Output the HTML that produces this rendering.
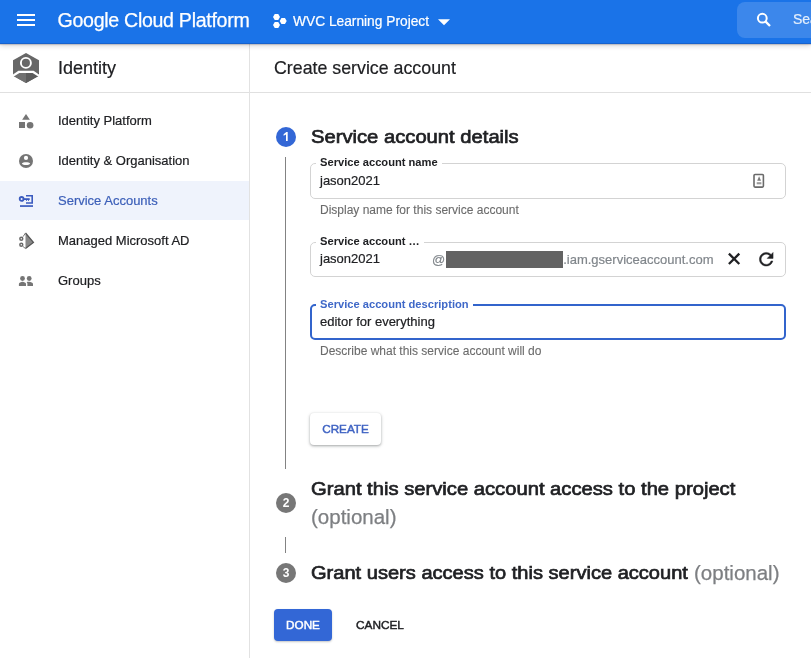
<!DOCTYPE html>
<html><head><meta charset="utf-8">
<style>
*{margin:0;padding:0;box-sizing:border-box}
html,body{width:811px;height:658px;overflow:hidden;background:#fff;font-family:"Liberation Sans",sans-serif;color:#202124}
.a{position:absolute;white-space:nowrap}
.sk{-webkit-text-stroke:0.2px currentColor}
.item .t,.val{-webkit-text-stroke:0.2px currentColor}
#wrap{position:absolute;left:0;top:0;width:811px;height:658px;will-change:transform}
#hdr{position:absolute;left:0;top:0;width:811px;height:44px;background:#1a73e8;box-shadow:inset 0 -1px 0 rgba(0,0,40,.14),0 1px 1px rgba(40,30,50,.18),0 2px 5px rgba(0,0,0,.16);z-index:5}
.hl{position:absolute;left:17px;width:18px;height:2px;background:#fff}
#search{position:absolute;left:737px;top:2px;width:120px;height:36px;border-radius:8px;background:rgba(255,255,255,.15)}
#side{position:absolute;left:0;top:44px;width:250px;height:614px;border-right:1px solid #e2e2e2}
#sidehdr{position:absolute;left:0;top:0;width:249px;height:49px;border-bottom:1px solid #e0e0e0}
.item{position:absolute;left:0;width:249px;height:40px}
.item .t{position:absolute;left:58px;top:1px;line-height:40px;font-size:13px;color:#202124}
.item svg{position:absolute;left:14px;top:8px}
#mainhdr{position:absolute;left:250px;top:44px;width:561px;height:49px;border-bottom:1px solid #e0e0e0}
.circ{position:absolute;width:20px;height:20px;border-radius:50%;color:#fff;font-size:12px;text-align:center;line-height:20px}
.vline{position:absolute;left:285px;width:1px;background:#838383}
.field{position:absolute;left:310px;width:476px;border:1px solid #d3d3d3;border-radius:5px}
.lbl{position:absolute;font-size:11.15px;font-weight:bold;background:#fff;padding:0 4px;line-height:13px}
.helper{position:absolute;left:320px;font-size:12px;color:#6b6b6b;line-height:14px;-webkit-text-stroke:0.1px #6b6b6b}
.val{position:absolute;left:320px;font-size:13px;color:#202124;line-height:16px}
.stephd{position:absolute;left:311px;font-size:19px;font-weight:normal;color:#202124;line-height:28px;-webkit-text-stroke:0.7px #202124;transform:scaleX(1.063);transform-origin:0 0}
.opt2{position:absolute;font-size:20.5px;color:#7d7f82;line-height:28px;-webkit-text-stroke:0.25px #7d7f82}
.opt{font-weight:normal;color:#80868b;font-size:20.5px;letter-spacing:0}
</style></head><body>
<div id="wrap">

<div id="hdr">
  <div class="hl" style="top:14px"></div>
  <div class="hl" style="top:19px"></div>
  <div class="hl" style="top:24px"></div>
  <div class="a" style="left:57.5px;top:8px;font-size:19.6px;line-height:24px;letter-spacing:-0.3px;color:#fff;-webkit-text-stroke:0.25px #fff">Google Cloud Platform</div>
  <svg class="a" style="left:268px;top:10px" width="24" height="22" viewBox="0 0 24 22"><path fill="#fff" d="M5.00 7.00 L6.75 3.90 L10.25 3.90 L12.00 7.00 L10.25 10.10 L6.75 10.10z M5.00 15.00 L6.75 11.90 L10.25 11.90 L12.00 15.00 L10.25 18.10 L6.75 18.10z M11.70 11.00 L13.45 7.90 L16.95 7.90 L18.70 11.00 L16.95 14.10 L13.45 14.10z"/></svg>
  <div class="a" style="left:293px;top:13px;font-size:13.75px;line-height:18px;color:#fff;-webkit-text-stroke:0.2px #fff">WVC Learning Project</div>
  <svg class="a" style="left:438px;top:19px" width="13" height="7" viewBox="0 0 13 7"><path d="M0 0.2h12L6 6.3z" fill="#fff"/></svg>
  <div id="search"></div>
  <svg class="a" style="left:750px;top:8px" width="26" height="24" viewBox="0 0 26 24"><circle cx="12.3" cy="10.2" r="4.4" fill="none" stroke="#fff" stroke-width="2"/><path d="M15.4 13.4L20 18" stroke="#fff" stroke-width="2.3" stroke-linecap="butt"/></svg>
  <div class="a" style="left:793px;top:10px;font-size:14px;line-height:18px;color:rgba(255,255,255,.85);-webkit-text-stroke:0.2px rgba(255,255,255,.85)">Search</div>
</div>

<div id="side">
  <div id="sidehdr">
    <svg class="a" style="left:13px;top:9px" width="26" height="30" viewBox="0 0 26 30">
      <path d="M13 0L26 7.2V22.8L13 30L0 22.8V7.2z" fill="#676767"/>
      <path d="M13 20V30L26 22.8V20z" fill="#5c5c5c"/>
      <path d="M13 20V30L0 22.8V20z" fill="#707070"/>
      <circle cx="12.9" cy="9.9" r="5" fill="none" stroke="#fff" stroke-width="1.9"/>
      <path d="M0 21.6L5.4 17.8H20.6L26 21.6V24L19.6 20H6.4L0 24z" fill="#fff"/>
    </svg>
    <div class="a" style="left:58px;top:12px;font-size:18px;line-height:24px;color:#202124;-webkit-text-stroke:0.2px #202124">Identity</div>
  </div>
  <div class="item" style="top:56px">
    <svg width="24" height="24" viewBox="0 0 24 24"><path d="M12 6L15.9 11.8H8.1z" fill="#757575"/><rect x="5" y="14" width="6" height="6" fill="#757575"/><circle cx="16.1" cy="17.2" r="3.3" fill="#757575"/></svg>
    <div class="t">Identity Platform</div>
  </div>
  <div class="item" style="top:96px">
    <svg width="24" height="24" viewBox="0 0 24 24"><circle cx="12" cy="13" r="7" fill="#757575"/><circle cx="12" cy="9.9" r="2.1" fill="#fff"/><path d="M7.8 15.4C9 13.7 15 13.7 16.2 15.4C15 17.5 9 17.5 7.8 15.4z" fill="#fff"/></svg>
    <div class="t">Identity &amp; Organisation</div>
  </div>
  <div class="item" style="top:136px;background:linear-gradient(#fff 0,#fff 1px,#eff3fc 1px)">
    <svg width="24" height="24" viewBox="0 0 24 24">
      <circle cx="7.6" cy="10.9" r="1.9" fill="none" stroke="#3b5bbf" stroke-width="1.8"/>
      <rect x="10" y="10.2" width="5.7" height="1.8" fill="#3b5bbf"/>
      <rect x="12" y="11.9" width="1" height="0.9" fill="#3b5bbf"/><rect x="14" y="11.9" width="1" height="0.9" fill="#3b5bbf"/>
      <path d="M12 7.75H18.2V14.95H12" fill="none" stroke="#3b5bbf" stroke-width="1.6"/>
      <rect x="6" y="17.2" width="13" height="1.7" fill="#3b5bbf"/>
    </svg>
    <div class="t" style="color:#3d60b9">Service Accounts</div>
  </div>
  <div class="item" style="top:176px">
    <svg width="24" height="24" viewBox="0 0 24 24">
      <path d="M11.5 5L19.4 14.4L11.5 20.6z" fill="#888"/>
      <path d="M11.5 5L19.4 14.4L11.5 20.6" fill="none" stroke="#555" stroke-width="1.3"/>
      <path d="M11.5 5L9 8.7M11.5 20.6L9 18.5" stroke="#777" stroke-width="1"/>
      <circle cx="7.3" cy="10.7" r="1.45" fill="none" stroke="#6a6a6a" stroke-width="1.5"/>
      <circle cx="7.3" cy="16.8" r="1.45" fill="none" stroke="#6a6a6a" stroke-width="1.5"/>
    </svg>
    <div class="t">Managed Microsoft AD</div>
  </div>
  <div class="item" style="top:216px">
    <svg width="24" height="24" viewBox="0 0 24 24">
      <circle cx="8.5" cy="10.5" r="2.4" fill="#757575"/><circle cx="15.2" cy="10.5" r="2.4" fill="#757575"/>
      <path d="M4.9 18V16c0-1.200 2.100-2.200 3.600-2.200s3.500 1 3.500 2.200V18z" fill="#757575"/>
      <path d="M13.4 18V15.6c0-.8-.5-1.400-.8-1.700.7-.1 1.500-.1 2.600-.1 1.500 0 3.800.9 3.800 2.300V18z" fill="#757575"/>
    </svg>
    <div class="t">Groups</div>
  </div>
</div>

<div id="mainhdr">
  <div class="a" style="left:24px;top:12px;font-size:17.8px;line-height:24px;color:#202124;-webkit-text-stroke:0.2px #202124">Create service account</div>
</div>

<!-- step 1 -->
<div class="circ" style="left:276px;top:127px;background:#3367d6"><svg style="position:absolute;left:0;top:0" width="20" height="20" viewBox="0 0 20 20"><path d="M7.6 7.3L10.3 5H11.7V14H10V7.4L7.6 8.7z" fill="#fff"/></svg></div>
<div class="stephd" style="top:123px">Service account details</div>
<div class="vline" style="top:157px;height:312px"></div>

<div class="field" style="top:163px;height:36px"></div>
<div class="lbl" style="left:316px;top:156px">Service account name</div>
<div class="val" style="top:173px">jason2021</div>
<svg class="a" style="left:752px;top:173px" width="14" height="17" viewBox="0 0 14 17">
  <rect x="2" y="1.5" width="9.4" height="12.6" rx="1" fill="none" stroke="#6a6a6a" stroke-width="1.6"/>
  <path d="M7.1 3.2L9 7.8H5.2z" fill="#7a7a7a"/><rect x="4.7" y="9.2" width="4.7" height="2.1" fill="#9a9a9a"/>
</svg>
<div class="helper" style="top:203px">Display name for this service account</div>

<div class="field" style="top:242px;height:35px"></div>
<div class="lbl" style="left:316px;top:235px">Service account …</div>
<div class="val" style="top:251px">jason2021</div>
<div class="a" style="left:432px;top:251px;font-size:13px;line-height:16px;color:#80868b;-webkit-text-stroke:0.2px #80868b">@<span style="display:inline-block;width:117px;height:17px;vertical-align:-4px;background:#636363;margin-left:1px"></span>.iam.gserviceaccount.com</div>
<svg class="a" style="left:724px;top:249px" width="20" height="20" viewBox="0 0 20 20"><path d="M4.9 4.6L15.3 15M15.3 4.6L4.9 15" stroke="#202124" stroke-width="2.3"/></svg>
<svg class="a" style="left:755.5px;top:249px" width="20.5" height="20.5" viewBox="0 0 24 24"><path fill="#202124" stroke="#202124" stroke-width=".5" d="M17.65 6.35C16.2 4.9 14.21 4 12 4c-4.42 0-7.99 3.58-7.99 8s3.57 8 7.99 8c3.73 0 6.84-2.55 7.73-6h-2.08c-.82 2.33-3.04 4-5.65 4-3.31 0-6-2.69-6-6s2.69-6 6-6c1.66 0 3.14.69 4.22 1.78L13 11h7V4l-2.35 2.35z"/></svg>

<div class="field" style="top:304px;height:36px;border:2px solid #3264cc;border-radius:5px"></div>
<div class="lbl" style="left:316px;top:298px;color:#3f68c8">Service account description</div>
<div class="val" style="top:314px">editor for everything</div>
<div class="helper" style="top:344px">Describe what this service account will do</div>

<div class="a" style="left:310px;top:413px;width:71px;height:32px;border-radius:4px;background:#fff;box-shadow:0 1px 2px rgba(60,64,67,.3),0 1px 3px 1px rgba(60,64,67,.15);color:#3f63c3;font-size:11.7px;font-weight:normal;-webkit-text-stroke:0.45px #3f63c3;text-align:center;line-height:31px;letter-spacing:0">CREATE</div>

<!-- step 2 -->
<div class="circ" style="left:276px;top:493px;background:#777;font-weight:bold">2</div>
<div class="stephd" style="top:475px">Grant this service account access to the project</div>
<div class="opt2" style="left:311px;top:503px">(optional)</div>
<div class="vline" style="top:537px;height:16px"></div>

<!-- step 3 -->
<div class="circ" style="left:276px;top:563px;background:#777;font-weight:bold">3</div>
<div class="stephd" style="top:559px;transform:scaleX(1.056)">Grant users access to this service account</div>
<div class="opt2" style="left:694px;top:559px">(optional)</div>

<div class="a" style="left:274px;top:609px;width:58px;height:32px;border-radius:4px;background:#3367d6;box-shadow:0 1px 2px rgba(60,64,67,.3);color:#fff;font-size:11.7px;font-weight:normal;-webkit-text-stroke:0.45px #fff;text-align:center;line-height:32px">DONE</div>
<div class="a" style="left:356px;top:609px;height:32px;color:#202124;font-size:11.8px;font-weight:normal;-webkit-text-stroke:0.45px #202124;line-height:32px">CANCEL</div>

</div>
</body></html>
